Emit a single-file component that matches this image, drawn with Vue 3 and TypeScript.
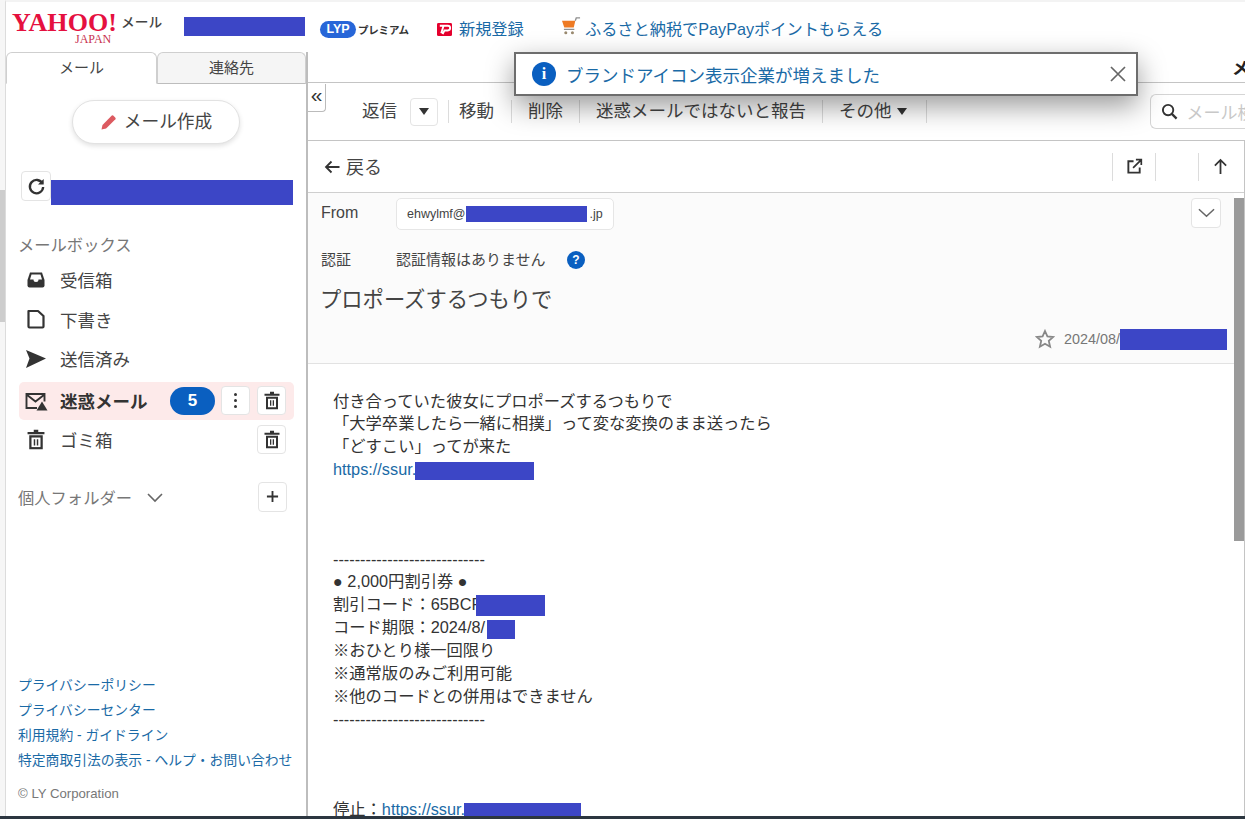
<script setup lang="ts">
interface Folder { name: string; icon: string; active?: boolean }
const folders: Folder[] = [
  { name: '受信箱', icon: 'inbox' },
  { name: '下書き', icon: 'draft' },
  { name: '送信済み', icon: 'sent' },
  { name: '迷惑メール', icon: 'spam', active: true },
  { name: 'ゴミ箱', icon: 'trash' },
]
const links = [
  ['プライバシーポリシー'],
  ['プライバシーセンター'],
  ['利用規約', 'ガイドライン'],
  ['特定商取引法の表示', 'ヘルプ・お問い合わせ'],
]
</script>

<template>
  <div class="page">
    <div class="rail"><div class="rail-thumb"></div></div>
    <div class="shell">
      <header class="top">
        <div class="logo">
          <span class="yahoo">YAHOO!</span>
          <span class="japan">JAPAN</span>
        </div>
        <span class="logo-mail">メール</span>
        <span class="redact user"></span>
        <span class="lyp">LYP</span>
        <span class="premium">プレミアム</span>
        <svg class="pp" viewBox="0 0 16 16" width="15" height="15">
          <rect width="16" height="14" y="1" rx="1.500" fill="#e5002d" />
          <path d="M3 4h8.500a2.200 2.200 0 0 1 0 5H8l-2 4M7 4 4.500 12" fill="none" stroke="#fff" stroke-width="2" />
        </svg>
        <a class="top-link reg">新規登録</a>
        <svg class="cart" viewBox="0 0 22 20" width="21" height="19">
          <path d="M1 4h14l-1.600 7H3.400z" fill="#ee7a24" />
          <path d="M15 4l1-3h4M3 13h11" fill="none" stroke="#8f8f8f" stroke-width="1.400" />
          <circle cx="5" cy="16.500" r="1.600" fill="#9a8a70" />
          <circle cx="12" cy="16.500" r="1.600" fill="#9a8a70" />
        </svg>
        <a class="top-link">ふるさと納税でPayPayポイントもらえる</a>
      </header>

      <div class="columns">
        <aside class="side">
          <div class="tabs">
            <div class="tab on">メール</div>
            <div class="tab">連絡先</div>
          </div>
          <div class="compose-wrap">
            <button class="compose">
              <svg viewBox="0 0 18 18" width="18" height="18">
                <path d="M1.500 16.500l1-4.600L11.800 2.600a1 1 0 0 1 1.400 0l2.200 2.200a1 1 0 0 1 0 1.400L6.100 15.500z" fill="#dc5a60" />
              </svg>
              <span>メール作成</span>
            </button>
          </div>
          <div class="refresh-row">
            <button class="sq refresh">
              <svg viewBox="0 0 18 18" width="19" height="19">
                <path d="M14.600 6.200A6.300 6.300 0 1 0 15.300 9.500" fill="none" stroke="#333" stroke-width="2.200" />
                <path d="M15.800 1.800v5.400h-5.400z" fill="#333" />
              </svg>
            </button>
            <span class="redact quota"></span>
          </div>
          <div class="label box-label">メールボックス</div>
          <ul class="folders">
            <li v-for="f in folders" :key="f.name" class="folder" :class="{ active: f.active }">
              <span class="f-icon">
                <svg v-if="f.icon === 'inbox'" viewBox="0 0 20 20" width="20" height="20">
                  <path d="M1.500 10 4 2.500h12L18.500 10v5.500a2 2 0 0 1-2 2h-13a2 2 0 0 1-2-2z" fill="#333" />
                  <path d="M4 9.500 5.500 4.500h9L16 9.500h-3.500a2.500 2.500 0 0 1-5 0z" fill="#fff" />
                </svg>
                <svg v-else-if="f.icon === 'draft'" viewBox="0 0 20 20" width="20" height="20">
                  <path d="M2.500 2h9.500l5.500 5v10.500a1 1 0 0 1-1 1h-13a1 1 0 0 1-1-1z" fill="none" stroke="#333" stroke-width="2.200" stroke-linejoin="round" />
                </svg>
                <svg v-else-if="f.icon === 'sent'" viewBox="0 0 22 20" width="22" height="20">
                  <path d="M1 1 21 9.500 1 19l3.500-9.500z" fill="#333" />
                </svg>
                <svg v-else-if="f.icon === 'spam'" viewBox="0 0 24 20" width="24" height="20">
                  <path d="M13 17H2.500V3h18v7.500M2.500 3.500l9 7 9-7" fill="none" stroke="#333" stroke-width="1.900" />
                  <path d="M18 10.500 23.500 19.500h-11z" fill="#333" />
                </svg>
                <svg v-else viewBox="2 1 16 18.500" width="18" height="21">
                  <path d="M8 1.500h4v2H8zM2.500 3.500h15v2h-15zM4 6.500h12V19H4z" fill="#333" />
                  <path d="M6 8.500h8V17H6z" fill="#fff" />
                  <path d="M8 10h1.300v5.500H8zM10.700 10H12v5.500h-1.300z" fill="#333" />
                </svg>
              </span>
              <span class="f-name">{{ f.name }}</span>
              <template v-if="f.active">
                <span class="badge">5</span>
                <button class="sq mini kebab"><i></i><i></i><i></i></button>
              </template>
              <button v-if="f.active || f.icon === 'trash'" class="sq mini">
                <svg viewBox="2 1 16 18.500" width="16" height="19">
                  <path d="M8 1.500h4v2H8zM2.500 3.500h15v2h-15zM4 6.500h12V19H4z" fill="#333" />
                  <path d="M6 8.500h8V17H6z" fill="#fff" />
                  <path d="M8 10h1.300v5.500H8zM10.700 10H12v5.500h-1.300z" fill="#333" />
                </svg>
              </button>
            </li>
          </ul>
          <div class="personal">
            <span class="label">個人フォルダー</span>
            <svg class="p-chev" viewBox="0 0 16 10" width="16" height="10">
              <path d="M1 1l7 7 7-7" fill="none" stroke="#666" stroke-width="1.600" />
            </svg>
            <button class="sq mini plus">
              <svg viewBox="0 0 14 14" width="13" height="13">
                <path d="M7 1v12M1 7h12" stroke="#333" stroke-width="2" />
              </svg>
            </button>
          </div>
          <footer class="side-foot">
            <div v-for="(l, i) in links" :key="i" class="foot-link">
              <a>{{ l[0] }}</a><template v-if="l[1]"> - <a>{{ l[1] }}</a></template>
            </div>
            <div class="copy">© LY Corporation</div>
          </footer>
        </aside>

        <main class="main">
          <div class="strip"><span class="strip-mark">メ</span></div>
          <div class="toolbar">
            <span class="tb first">返信</span>
            <button class="sq drop"><b class="caret"></b></button>
            <span class="tb lead">移動</span>
            <span class="tb">削除</span>
            <span class="tb">迷惑メールではないと報告</span>
            <span class="tb more">その他<b class="caret"></b></span>
            <div class="search">
              <svg viewBox="0 0 18 18" width="17" height="17">
                <circle cx="7.500" cy="7.500" r="5.500" fill="none" stroke="#333" stroke-width="2" />
                <path d="M11.500 11.500 16.500 16.500" stroke="#333" stroke-width="2.400" />
              </svg>
              <span>メール検索</span>
            </div>
          </div>
          <div class="mail">
            <div class="backbar">
              <svg viewBox="0 0 16 14" width="16" height="14">
                <path d="M15.500 7H2M7.500 1.500 2 7l5.500 5.500" fill="none" stroke="#333" stroke-width="1.800" />
              </svg>
              <span class="back">戻る</span>
              <div class="bar-actions">
                <span class="act">
                  <svg viewBox="0 0 18 18" width="17" height="17">
                    <path d="M8 3.500H2.500v12h12V10" fill="none" stroke="#333" stroke-width="2" />
                    <path d="M7.500 10.500 15.500 2.500M10.500 1.800h5.700v5.700" fill="none" stroke="#333" stroke-width="1.800" />
                  </svg>
                </span>
                <span class="act"></span>
                <span class="act">
                  <svg viewBox="0 0 16 18" width="15" height="17">
                    <path d="M8 17V2M2 8l6-6 6 6" fill="none" stroke="#333" stroke-width="1.900" />
                  </svg>
                </span>
              </div>
            </div>
            <div class="scroll-area">
              <div class="scroll-content">
                <section class="head">
                  <div class="from-row">
                    <span class="field">From</span>
                    <span class="chip">ehwylmf@<span class="redact addr"></span>.jp</span>
                    <button class="sq expand">
                      <svg viewBox="0 0 18 10" width="17" height="10">
                        <path d="M1 1l8 7.500L17 1" fill="none" stroke="#666" stroke-width="1.600" />
                      </svg>
                    </button>
                  </div>
                  <div class="auth-row">
                    <span class="field">認証</span>
                    <span class="auth">認証情報はありません</span>
                    <span class="help">?</span>
                  </div>
                  <h1 class="subject">プロポーズするつもりで</h1>
                  <div class="date-row">
                    <svg viewBox="0 0 20 20" width="20" height="20">
                      <path d="M10 2l2.400 5.400 5.800.6-4.400 3.900 1.300 5.800L10 14.700l-5.100 3 1.300-5.800L1.800 8l5.800-.6z" fill="none" stroke="#888" stroke-width="1.800" />
                    </svg>
                    <span class="date">2024/08/</span><span class="redact when"></span>
                  </div>
                </section>
                <article class="body">
                  <p>付き合っていた彼女にプロポーズするつもりで</p>
                  <p>「大学卒業したら一緒に相撲」って変な変換のまま送ったら</p>
                  <p>「どすこい」ってが来た</p>
                  <p><a>https://ssur.</a><span class="redact r1"></span></p>
                  <p class="gap">----------------------------</p>
                  <p>● 2,000円割引券 ●</p>
                  <p>割引コード：65BCF<span class="redact r2"></span></p>
                  <p>コード期限：2024/8/<span class="redact r3"></span></p>
                  <p>※おひとり様一回限り</p>
                  <p>※通常版のみご利用可能</p>
                  <p>※他のコードとの併用はできません</p>
                  <p>----------------------------</p>
                  <p class="gap2">停止：<a>https://ssur.</a><span class="redact r4"></span></p>
                </article>
              </div>
              <div class="scrollbar"><div class="thumb"></div></div>
            </div>
          </div>
        </main>
      </div>
    </div>

    <button class="collapse">«</button>

    <div class="toast">
      <span class="i-dot">i</span>
      <span class="toast-text">ブランドアイコン表示企業が増えました</span>
      <svg viewBox="0 0 16 16" width="16" height="16">
        <path d="M1 1l14 14M15 1 1 15" stroke="#666" stroke-width="1.700" />
      </svg>
    </div>
    <div class="taskbar"></div>
  </div>
</template>

<style>
html, body { margin: 0; padding: 0; overflow: hidden; }
</style>

<style scoped>
* { box-sizing: border-box; }
.page {
  position: relative;
  width: 1245px;
  height: 819px;
  overflow: hidden;
  background: #fff;
  color: #333;
  font-family: "Liberation Sans", "Noto Sans CJK JP", sans-serif;
  display: flex;
}
.rail { width: 5px; flex: none; background: #f6f6f6; padding-top: 190px; }
.rail-thumb { height: 132px; background: #cdcdcd; }
.shell { flex: 1; min-width: 0; display: flex; flex-direction: column; border-top: 2px solid #f3f3f3; border-left: 1px solid #dcdcdc; }
a { color: #1a6aa6; }
ul, p, h1 { margin: 0; padding: 0; }
button { font-family: inherit; color: inherit; }
.redact { display: inline-block; background: #3c46c6; vertical-align: middle; }

.top {
  height: 50px;
  flex: none;
  display: flex;
  align-items: center;
  padding: 5px 0 0 6px;
  white-space: nowrap;
}
.logo { width: 107px; height: 40px; position: relative; line-height: 1; }
.yahoo {
  position: absolute; left: 0; top: 1px; height: 23px;
  font: 700 26px/23px "Liberation Serif", serif;
  letter-spacing: .1px;
  color: #e5103f;
}
.japan {
  position: absolute; left: 63px; top: 24px; height: 11px;
  font: 400 12px/11px "Liberation Serif", serif;
  color: #c8324f;
}
.logo-mail { font-size: 13.700px; font-weight: 500; color: #444; margin: -17px 0 0 2px; width: 41px; }
.user { width: 121px; height: 19px; margin: -6px 0 0 22px; }
.lyp {
  margin-left: 15px; width: 36px; height: 17px; border-radius: 9px;
  background: #2766d8; color: #fff;
  font: 700 12.500px/17px "Liberation Sans", sans-serif; text-align: center;
}
.premium { font-size: 10.500px; font-weight: 700; color: #333; margin-left: 2px; width: 50px; letter-spacing: -.2px; }
.pp { margin-left: 29px; }
.top-link { font-size: 16.200px; color: #1a6aa6; line-height: 1; }
.reg { margin-left: 7px; width: 65px; }
.cart { margin: -6px 0 0 37px; }
.cart + .top-link { margin-left: 3px; }

.columns { flex: 1; min-height: 0; display: flex; }
.side {
  width: 302px; flex: none;
  border-right: 2px solid #bdbdbd;
  display: flex; flex-direction: column;
  padding-bottom: 16px;
}
.tabs { display: flex; height: 32px; flex: none; }
.tab {
  width: 149px; height: 32px;
  border: 1px solid #cfcfcf; border-bottom: 1px solid #bdbdbd;
  border-radius: 6px 6px 0 0;
  background: #f5f5f5;
  font-size: 15px; line-height: 30px; text-align: center; color: #444;
}
.tab.on { background: #fff; border-bottom-color: #fff; width: 151px; }
.compose-wrap { padding: 16px 0 0 66px; }
.compose {
  width: 168px; height: 44px; border-radius: 22px;
  background: #fff; border: 1px solid #e2e2e2;
  box-shadow: 0 2px 5px rgba(0, 0, 0, .12);
  font-size: 17.700px; color: #444;
  display: flex; align-items: center; justify-content: center; gap: 6px;
}
.compose span { margin-top: -4px; }
.refresh-row { display: flex; margin: 27px 0 0 15px; height: 34px; }
.sq {
  background: #fff; border: 1px solid #e4e4e4; border-radius: 4px;
  padding: 0; display: flex; align-items: center; justify-content: center;
}
.refresh { width: 30px; height: 30px; }
.quota { width: 242px; height: 25px; margin-top: 9px; }
.label { font-size: 16.300px; color: #777; line-height: 24px; }
.box-label { margin: 28px 0 0 12px; }
.folders { list-style: none; margin: 3px 0 0 13px; width: 275px; }
.folder { height: 39.500px; display: flex; align-items: center; border-radius: 5px; padding-right: 8px; font-size: 17.500px; }
.f-icon { width: 41px; display: flex; justify-content: center; padding-right: 7px; flex: none; }
.f-name { flex: 1; color: #444; }
.active { background: #fdeaea; height: 38px; margin-top: 3px; }
.active .f-name { font-weight: 700; color: #333; }
.badge {
  width: 45px; height: 28px; border-radius: 14px;
  background: #0a5fc0; color: #fff;
  font: 700 17px/28px "Liberation Sans", sans-serif; text-align: center;
}
.mini { width: 29px; height: 29px; flex: none; }
.kebab { margin: 0 7px 0 6px; flex-direction: column; gap: 2.500px; }
.kebab i { width: 3.500px; height: 3.500px; border-radius: 50%; background: #333; }
.personal { display: flex; align-items: center; margin: 22.500px 0 0 12px; height: 30px; padding-right: 19px; }
.personal .label { padding-top: 3px; }
.p-chev { margin: 3px 0 0 15px; }
.plus { margin-left: auto; height: 30px; }
.side-foot { margin-top: auto; padding-left: 12px; }
.foot-link { font-size: 13.800px; line-height: 25px; color: #1a6aa6; white-space: nowrap; }
.copy { font: 13.200px/18px "Liberation Sans", sans-serif; color: #777; margin-top: 12px; }

.main { flex: 1; min-width: 0; display: flex; flex-direction: column; }
.strip { height: 31px; flex: none; border-bottom: 1px solid #c4c4c4; position: relative; overflow: hidden; }
.strip-mark { position: absolute; left: 924px; top: 2px; font-size: 17px; font-weight: 700; color: #222; }
.toolbar { height: 57px; flex: none; display: flex; align-items: center; padding-left: 54px; overflow: hidden; white-space: nowrap; }
.tb { font-size: 17.500px; color: #444; line-height: 22px; padding: 0 16px 1px; border-right: 1px solid #dcdcdc; flex: none; }
.tb.first { padding: 0 13px 1px 0; border: 0; }
.tb.lead { border-left: 1px solid #dcdcdc; padding: 0 17px 1px 10px; }
.drop { width: 28px; height: 28px; margin-right: 10px; flex: none; }
.caret { display: inline-block; border: 5.500px solid transparent; border-top: 7px solid #333; border-bottom: 0; vertical-align: 2px; }
.more .caret { margin-left: 5px; }
.more { padding-right: 19px; }
.search {
  margin-left: 223px; width: 95px; height: 35px; flex: none;
  border: 1px solid #d5d5d5; border-radius: 6px 0 0 6px; border-right: 0;
  display: flex; align-items: center; gap: 9px; padding-left: 10px;
  font-size: 17px; color: #c8c8c8; overflow: hidden;
}
.search svg { flex: none; }
.mail { flex: 1; min-height: 0; display: flex; flex-direction: column; border-top: 1px solid #c4c4c4; border-right: 1px solid #c4c4c4; }
.backbar { height: 52px; flex: none; display: flex; align-items: center; padding-left: 16px; border-bottom: 1px solid #cfcfcf; }
.back { font-size: 18px; margin: -1px 0 0 6px; color: #444; }
.bar-actions { margin-left: auto; display: flex; padding-right: 3px; }
.act { width: 43px; height: 28px; border-left: 1px solid #dcdcdc; display: flex; align-items: center; justify-content: center; }
.scroll-area { flex: 1; min-height: 0; display: flex; position: relative; }
.scroll-content { flex: 1; min-width: 0; overflow: hidden; }
.scrollbar { width: 10px; flex: none; padding-top: 5px; background: #fff; }
.thumb { height: 343px; background: #9a9a9a; }

.head { height: 171px; background: #fbfbfb; border-bottom: 1px solid #e2e2e2; padding: 5px 13px 0 13px; position: relative; }
.from-row { display: flex; align-items: flex-start; }
.field { width: 75px; font-size: 15px; color: #444; line-height: 22px; flex: none; margin-top: 2px; }
.from-row .field { font-size: 16px; margin-top: 4px; }
.chip {
  width: 218px; height: 32px; background: #fff;
  border: 1px solid #e6e6e6; border-radius: 5px;
  font: 12.500px/30px "Liberation Sans", sans-serif; color: #444;
  padding-left: 10px; white-space: nowrap;
}
.addr { width: 121px; height: 16px; margin: -2px 3px 0 0; }
.expand { margin-left: auto; width: 30px; height: 30px; }
.auth-row { display: flex; align-items: center; height: 24px; margin-top: 17px; }
.auth { font-size: 15px; color: #444; width: 171px; margin-top: -2px; }
.help {
  width: 18px; height: 18px; border-radius: 50%; background: #0a5fc0; color: #fff;
  font: 700 12px/18px "Liberation Sans", sans-serif; text-align: center; margin-top: 1px;
}
.subject { font-size: 21.300px; font-weight: 400; line-height: 30px; color: #444; margin: 14px 0 0 -1px; }
.date-row { position: absolute; right: 7px; top: 135px; display: flex; align-items: center; height: 22px; }
.date { font: 14.400px/22px "Liberation Sans", sans-serif; color: #777; margin-left: 9px; }
.when { width: 107px; height: 21px; }

.body { padding: 25.500px 0 0 25px; font-size: 16.300px; line-height: 22.800px; color: #333; white-space: nowrap; }
.gap { margin-top: 67px; }
.gap2 { margin-top: 68px; }
.r1 { width: 119px; height: 18px; margin-left: -1px; }
.r2 { width: 69px; height: 21px; margin-left: -5px; }
.r3 { width: 28px; height: 19px; margin-left: 2px; }
.r4 { width: 117px; height: 17px; margin-left: -1px; }

.collapse {
  position: absolute; left: 308px; top: 84px; width: 18px; height: 28px;
  background: #fff; border: 0; border-right: 1px solid #bbb; border-bottom: 1px solid #bbb;
  border-radius: 0 0 4px 0; padding: 0 0 6px;
  font: 21px/18px "Liberation Sans", sans-serif; color: #333;
}
.toast {
  position: absolute; left: 514px; top: 52px; width: 624px; height: 44px;
  background: #fff; border: 2px solid #6d6d6d;
  box-shadow: 0 10px 28px rgba(0, 0, 0, .4);
  display: flex; align-items: center; padding: 0 10px 0 16px;
}
.i-dot {
  width: 24px; height: 24px; border-radius: 50%; background: #0a5fc0; color: #fff;
  font: 700 16px/24px "Liberation Serif", serif; text-align: center; flex: none;
}
.toast-text { flex: 1; margin-left: 10px; font-size: 17.500px; color: #1a6aa6; }
.taskbar { position: absolute; left: 0; right: 0; bottom: 0; height: 3px; background: #2c3640; }
</style>
